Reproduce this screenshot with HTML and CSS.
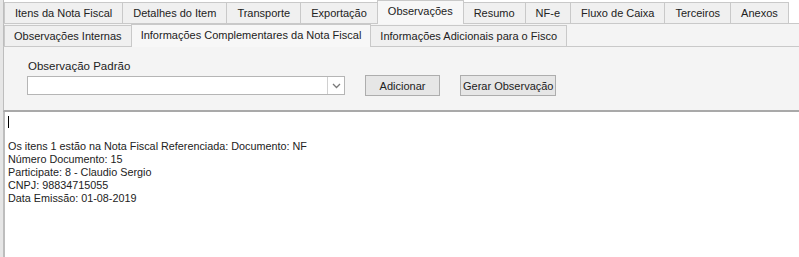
FILE: index.html
```html
<!doctype html>
<html lang="pt-BR">
<head>
    <meta charset="UTF-8">
    <title>Observações</title>
    <link rel="stylesheet" href="styles.css">
</head>
<body>
    <div id="janela">
        <ul class="abas">
            <li>Itens da Nota Fiscal</li>
            <li>Detalhes do Item</li>
            <li>Transporte</li>
            <li>Exportação</li>
            <li class="ativa">Observações</li>
            <li>Resumo</li>
            <li>NF-e</li>
            <li>Fluxo de Caixa</li>
            <li>Terceiros</li>
            <li>Anexos</li>
        </ul>
        <ul class="abas sub">
            <li>Observações Internas</li>
            <li class="ativa">Informações Complementares da Nota Fiscal</li>
            <li>Informações Adicionais para o Fisco</li>
        </ul>
        <div id="painel">
            <div class="campo">
                <label>Observação Padrão</label>
                <div class="combo">
                    <span class="valor"></span>
                    <span class="seta">
                        <svg width="9" height="6" viewBox="0 0 9 6"><path d="M1 1 L4.5 4.5 L8 1" fill="none" stroke="#7a7a7a" stroke-width="1.3"/></svg>
                    </span>
                </div>
            </div>
            <button class="btn largo">Adicionar</button>
            <button class="btn">Gerar Observação</button>
        </div>
        <div id="texto">
            <span class="cursor"></span>
            <p>Os itens 1 estão na Nota Fiscal Referenciada: Documento: NF<br>
            Número Documento: 15<br>
            Participate: 8 - Claudio Sergio<br>
            CNPJ: 98834715055<br>
            Data Emissão: 01-08-2019</p>
        </div>
    </div>
</body>
</html>
```

FILE: styles.css
```css
*{
    margin:0;
    padding:0;
    box-sizing: border-box;
}
ul{
    list-style: none;
}
body{
    font-family: "Liberation Sans", Arial, sans-serif;
    font-size: 11px;
    color: #222;
    background-color: #fff;
}
#janela{
    height:257px;
    display:flex;
    flex-direction: column;
    border-left: 3px solid #e6e6e6;
    background-color: #f4f4f4;
}
.abas{
    display:flex;
    align-items: flex-end;
    height:24px;
    padding-left:1px;
    border-bottom:1px solid #c9c9c9;
    background-color: #fff;
    border-left: 1px solid #bdbdbd;
}
.abas li{
    height:21px;
    line-height: 20px;
    padding:0 10px;
    border:1px solid #c9c9c9;
    border-bottom: none;
    margin-left:-1px;
    background-color: #f0f0f0;
    white-space: nowrap;
}
.abas li.ativa{
    height:24px;
    line-height: 21px;
    background-color: #f7f7f7;
    margin-bottom: -1px;
    position: relative;
}
.abas.sub{
    background-color: #f4f4f4;
    height:23px;
}
.abas.sub li{
    height:21px;
    padding:0 9px;
}
.abas.sub li.ativa{
    height:23px;
}
#painel{
    display:flex;
    align-items: flex-end;
    height:65px;
    padding:0 0 15px 23px;
    border-left: 1px solid #bdbdbd;
    border-bottom: 2px solid #a9a9a9;
}
.campo label{
    display:block;
    margin:0 0 4px 1px;
    font-size: 11.5px;
}
.combo{
    display:flex;
    width:318px;
    height:19px;
    border:1px solid #b5b5b5;
    background-color: #fff;
}
.combo .valor{
    flex:1;
}
.combo .seta{
    width:17px;
    border-left:1px solid #d0d0d0;
    display:flex;
    align-items: center;
    justify-content: center;
}
.btn{
    font-family: inherit;
    font-size: 11px;
    color:#222;
    height:21px;
    margin:0 0 -1px 20px;
    padding:0 2px;
    border:1px solid #adadad;
    background-color: #e6e6e6;
}
.btn.largo{
    width:75px;
}
#texto{
    flex:1;
    background-color: #fff;
    border-left: 2px solid #bdbdbd;
    padding:4px 0 0 3px;
    font-size: 10.8px;
    color:#222;
}
.cursor{
    display:block;
    width:1px;
    height:12px;
    background-color: #000;
}
#texto p{
    margin-top:12px;
    line-height: 13px;
}
```
